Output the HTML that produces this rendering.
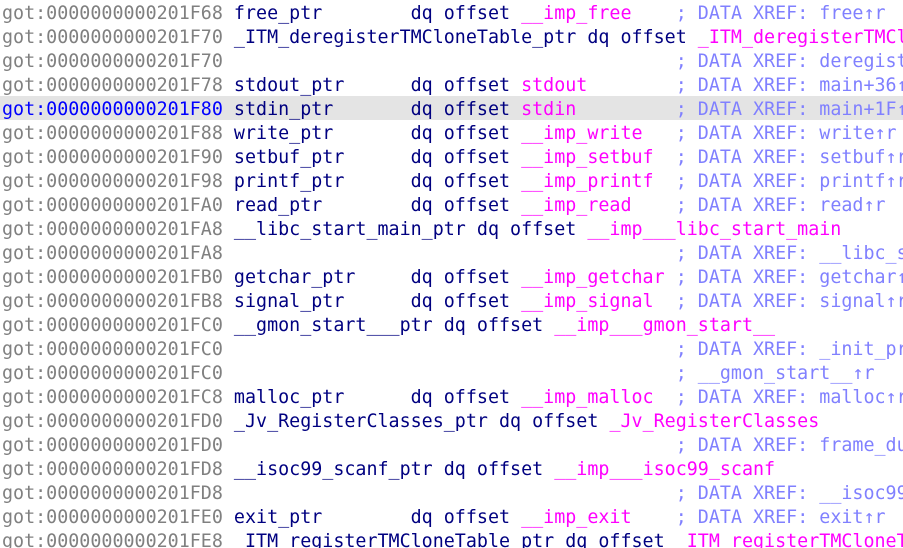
<!DOCTYPE html><html><head><style>
html,body{margin:0;padding:0;background:#fff;width:903px;height:548px;overflow:hidden}
pre{margin:0;padding:2px 0 0 2px;font-family:"DejaVu Sans Mono","Liberation Mono",monospace;font-size:18.35px;line-height:24px;color:#000080;white-space:pre;overflow:hidden;width:901px}
.a{color:#808080}.m{color:#ff00ff}.c{color:#8080ff}
.h{background:#e4e4e4;display:block;margin-left:-2px;padding-left:2px;margin-top:-2px;padding-top:2px;height:22px;margin-bottom:2px}.h .a{color:#0000ff}
</style></head><body><pre><span class="a">got:0000000000201F68</span> free_ptr        dq offset <span class="m">__imp_free</span>    <span class="c">; DATA XREF: free↑r</span>
<span class="a">got:0000000000201F70</span> _ITM_deregisterTMCloneTable_ptr dq offset <span class="m">_ITM_deregisterTMCloneTable</span>
<span class="a">got:0000000000201F70</span>                                         <span class="c">; DATA XREF: deregister_tm_clones</span>
<span class="a">got:0000000000201F78</span> stdout_ptr      dq offset <span class="m">stdout</span>        <span class="c">; DATA XREF: main+36↑r</span>
<span class="h"><span class="a">got:0000000000201F80</span> stdin_ptr       dq offset <span class="m">stdin</span>         <span class="c">; DATA XREF: main+1F↑r</span></span><span class="a">got:0000000000201F88</span> write_ptr       dq offset <span class="m">__imp_write</span>   <span class="c">; DATA XREF: write↑r</span>
<span class="a">got:0000000000201F90</span> setbuf_ptr      dq offset <span class="m">__imp_setbuf</span>  <span class="c">; DATA XREF: setbuf↑r</span>
<span class="a">got:0000000000201F98</span> printf_ptr      dq offset <span class="m">__imp_printf</span>  <span class="c">; DATA XREF: printf↑r</span>
<span class="a">got:0000000000201FA0</span> read_ptr        dq offset <span class="m">__imp_read</span>    <span class="c">; DATA XREF: read↑r</span>
<span class="a">got:0000000000201FA8</span> __libc_start_main_ptr dq offset <span class="m">__imp___libc_start_main</span>
<span class="a">got:0000000000201FA8</span>                                         <span class="c">; DATA XREF: __libc_start_main</span>
<span class="a">got:0000000000201FB0</span> getchar_ptr     dq offset <span class="m">__imp_getchar</span> <span class="c">; DATA XREF: getchar↑r</span>
<span class="a">got:0000000000201FB8</span> signal_ptr      dq offset <span class="m">__imp_signal</span>  <span class="c">; DATA XREF: signal↑r</span>
<span class="a">got:0000000000201FC0</span> __gmon_start___ptr dq offset <span class="m">__imp___gmon_start__</span>
<span class="a">got:0000000000201FC0</span>                                         <span class="c">; DATA XREF: _init_proc</span>
<span class="a">got:0000000000201FC0</span>                                         <span class="c">; __gmon_start__↑r</span>
<span class="a">got:0000000000201FC8</span> malloc_ptr      dq offset <span class="m">__imp_malloc</span>  <span class="c">; DATA XREF: malloc↑r</span>
<span class="a">got:0000000000201FD0</span> _Jv_RegisterClasses_ptr dq offset <span class="m">_Jv_RegisterClasses</span>
<span class="a">got:0000000000201FD0</span>                                         <span class="c">; DATA XREF: frame_dummy</span>
<span class="a">got:0000000000201FD8</span> __isoc99_scanf_ptr dq offset <span class="m">__imp___isoc99_scanf</span>
<span class="a">got:0000000000201FD8</span>                                         <span class="c">; DATA XREF: __isoc99_scanf</span>
<span class="a">got:0000000000201FE0</span> exit_ptr        dq offset <span class="m">__imp_exit</span>    <span class="c">; DATA XREF: exit↑r</span>
<span class="a">got:0000000000201FE8</span> _ITM_registerTMCloneTable_ptr dq offset <span class="m">_ITM_registerTMCloneTable</span>
</pre></body></html>
